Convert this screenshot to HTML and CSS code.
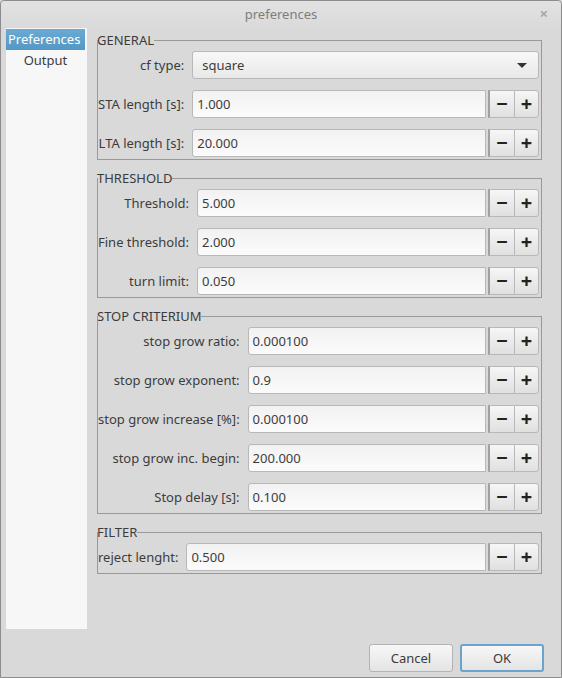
FILE: index.html
```html
<!DOCTYPE html>
<html>
<head>
<meta charset="utf-8">
<link rel="stylesheet" href="styles.css">
</head>
<body>
<div class="window">
  <div class="titlebar">
    <span class="title">preferences</span>
    <span class="close">×</span>
  </div>
  <div class="main">
    <ul class="sidebar">
      <li class="item selected">Preferences</li>
      <li class="item">Output</li>
    </ul>
    <div class="content">
      <section class="group">
        <div class="ghead"><span class="gtitle">GENERAL</span><span class="gline"></span></div>
        <div class="gbody">
          <label class="lbl">cf type:</label>
          <div class="combo"><span>square</span><span class="arrow"></span></div>
          <label class="lbl">STA length [s]:</label>
          <div class="spin"><div class="field">1.000</div><div class="btn minus">−</div><div class="btn plus">+</div></div>
          <label class="lbl">LTA length [s]:</label>
          <div class="spin"><div class="field">20.000</div><div class="btn minus">−</div><div class="btn plus">+</div></div>
        </div>
      </section>
      <section class="group">
        <div class="ghead"><span class="gtitle">THRESHOLD</span><span class="gline"></span></div>
        <div class="gbody">
          <label class="lbl">Threshold:</label>
          <div class="spin"><div class="field">5.000</div><div class="btn minus">−</div><div class="btn plus">+</div></div>
          <label class="lbl">Fine threshold:</label>
          <div class="spin"><div class="field">2.000</div><div class="btn minus">−</div><div class="btn plus">+</div></div>
          <label class="lbl">turn limit:</label>
          <div class="spin"><div class="field">0.050</div><div class="btn minus">−</div><div class="btn plus">+</div></div>
        </div>
      </section>
      <section class="group">
        <div class="ghead"><span class="gtitle">STOP CRITERIUM</span><span class="gline"></span></div>
        <div class="gbody">
          <label class="lbl">stop grow ratio:</label>
          <div class="spin"><div class="field">0.000100</div><div class="btn minus">−</div><div class="btn plus">+</div></div>
          <label class="lbl">stop grow exponent:</label>
          <div class="spin"><div class="field">0.9</div><div class="btn minus">−</div><div class="btn plus">+</div></div>
          <label class="lbl">stop grow increase [%]:</label>
          <div class="spin"><div class="field">0.000100</div><div class="btn minus">−</div><div class="btn plus">+</div></div>
          <label class="lbl">stop grow inc. begin:</label>
          <div class="spin"><div class="field">200.000</div><div class="btn minus">−</div><div class="btn plus">+</div></div>
          <label class="lbl">Stop delay [s]:</label>
          <div class="spin"><div class="field">0.100</div><div class="btn minus">−</div><div class="btn plus">+</div></div>
        </div>
      </section>
      <section class="group">
        <div class="ghead"><span class="gtitle">FILTER</span><span class="gline"></span></div>
        <div class="gbody">
          <label class="lbl">reject lenght:</label>
          <div class="spin"><div class="field">0.500</div><div class="btn minus">−</div><div class="btn plus">+</div></div>
        </div>
      </section>
    </div>
  </div>
  <div class="footer">
    <button class="pbtn">Cancel</button>
    <button class="pbtn default">OK</button>
  </div>
</div>
</body>
</html>
```
FILE: styles.css
```css
* { box-sizing: border-box; }
html, body { margin: 0; padding: 0; }
body {
  width: 562px;
  height: 678px;
  overflow: hidden;
  font-family: "Noto Sans", "DejaVu Sans", sans-serif;
  font-size: 13px;
  color: #3c3c3c;
  background: #d9d9d9;
}
.window {
  width: 562px;
  height: 678px;
  border: 1px solid #8c8c8c;
  border-radius: 4px 4px 0 0;
  background: #d9d9d9;
  display: flex;
  flex-direction: column;
}
.titlebar {
  height: 27px;
  flex: none;
  display: flex;
  align-items: center;
  justify-content: center;
  position: relative;
  background: linear-gradient(#e2e2e2, #dadada);
  border-radius: 4px 4px 0 0;
}
.title {
  color: #7d7d7d;
  font-size: 13px;
  margin-top: -2px;
}
.close {
  position: absolute;
  right: 13px;
  top: 2px;
  color: #a8a8a8;
  font-size: 15px;
  font-weight: bold;
}
.main {
  display: flex;
  flex: none;
  height: 601px;
  padding-left: 5px;
}
.sidebar {
  list-style: none;
  margin: 0;
  padding: 1px 2px 0 0;
  width: 81px;
  height: 601px;
  background: #f7f7f7;
  flex: none;
}
.item {
  height: 21px;
  line-height: 21px;
  text-align: center;
  color: #3c3c3c;
}
.item.selected {
  background: linear-gradient(#6aaad4, #5597c3);
  color: #ffffff;
  text-align: left;
  padding-left: 2px;
}
.content {
  flex: 1;
  padding: 4px 19px 0 10px;
  display: flex;
  flex-direction: column;
  gap: 10px;
}
.group {
  display: flex;
  flex-direction: column;
}
.ghead {
  height: 16px;
  display: flex;
  align-items: center;
}
.gtitle {
  line-height: 16px;
  color: #3c3c3c;
}
.gline {
  flex: 1;
  height: 9px;
  border-top: 1px solid #999999;
  border-right: 1px solid #999999;
  margin-top: 8px;
}
.gbody {
  border: 1px solid #999999;
  border-top: none;
  padding: 11px 2px 2px 0;
  display: grid;
  grid-template-columns: auto 1fr;
  column-gap: 8px;
  row-gap: 11px;
  margin-top: -8px;
}
.lbl {
  text-align: right;
  line-height: 28px;
  height: 28px;
  white-space: nowrap;
}
.combo {
  height: 28px;
  border: 1px solid #b8b8b8;
  border-radius: 3px;
  background: linear-gradient(#f8f8f8, #e8e8e8);
  display: flex;
  align-items: center;
  justify-content: space-between;
  padding: 0 11px 0 9px;
}
.arrow {
  width: 0;
  height: 0;
  border-left: 5px solid transparent;
  border-right: 5px solid transparent;
  border-top: 5px solid #333333;
}
.spin {
  height: 28px;
  display: flex;
}
.field {
  flex: 1;
  height: 28px;
  border: 1px solid #b8b8b8;
  border-radius: 3px 0 0 3px;
  background: linear-gradient(#f2f2f2, #fbfbfb);
  line-height: 26px;
  padding-left: 4px;
  margin-right: 2px;
}
.btn {
  width: 26px;
  height: 28px;
  border: 1px solid #b8b8b8;
  background: linear-gradient(#f6f6f6, #e0e0e0);
  display: flex;
  align-items: center;
  justify-content: center;
  font-size: 20px;
  font-weight: bold;
  color: #222222;
  line-height: 1;
}
.btn.minus {
  border-left: 2px solid #a0a0a0;
  border-right: none;
  width: 26px;
}
.btn.plus {
  border-radius: 0 3px 3px 0;
  width: 25px;
}
.footer {
  flex: 1;
  display: flex;
  justify-content: flex-end;
  align-items: flex-start;
  gap: 7px;
  padding: 15px 17px 0 0;
}
.pbtn {
  width: 84px;
  height: 28px;
  font-family: "Noto Sans", "DejaVu Sans", sans-serif;
  font-size: 13px;
  color: #3c3c3c;
  border: 1px solid #b3b3b3;
  border-radius: 3px;
  background: linear-gradient(#f7f7f7, #e4e4e4);
  padding: 0;
}
.pbtn.default {
  border: 2px solid #6aa3cc;
}
```
